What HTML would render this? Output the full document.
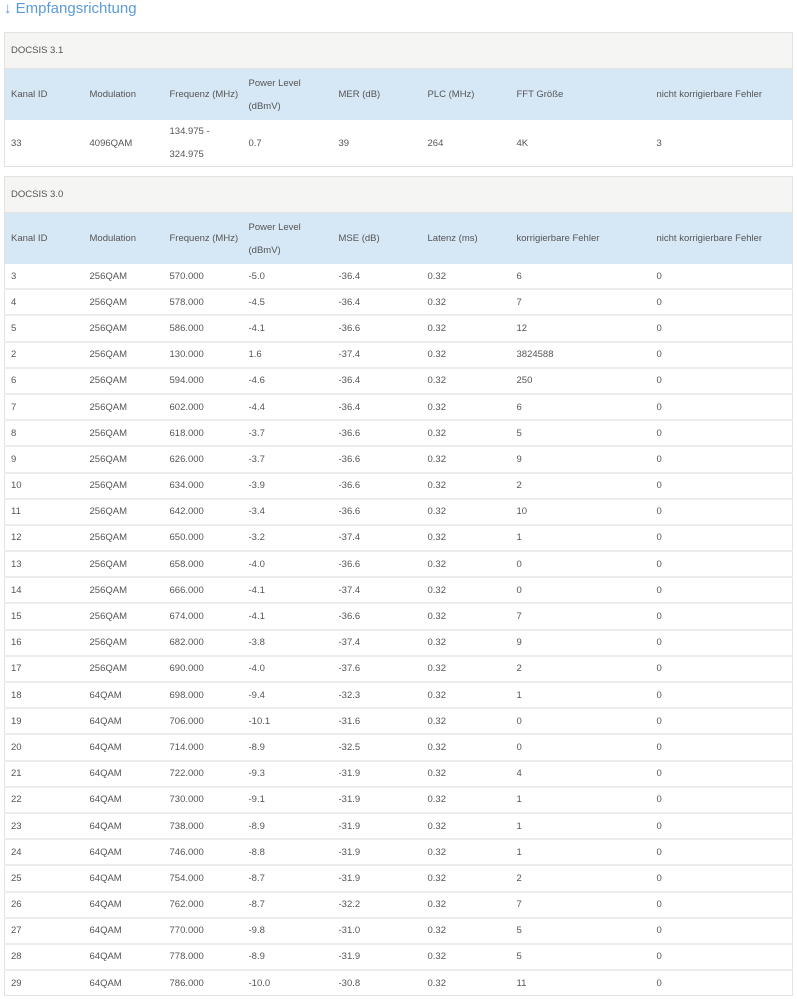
<!DOCTYPE html>
<html><head><meta charset="utf-8"><style>
body{margin:0;background:#fff;font-family:"Liberation Sans",sans-serif;color:#555;}
h2{position:absolute;left:4px;top:-1px;margin:0;font-size:15px;font-weight:normal;color:#5b9bd9;line-height:20px;}
table{position:absolute;left:4px;width:789px;border-collapse:collapse;table-layout:fixed;font-size:9.5px;border:1px solid #e2e2e2;}
td{padding:0 0 0 6px;white-space:nowrap;overflow:hidden;}
tr.cap td{background:#f5f5f3;height:35px;border-bottom:1px solid #e2e2e2;}
tr.hd td{background:#d6e7f5;height:51px;line-height:23px;}
tr.r td{height:24.2px;border-bottom:2px solid #ececec;}
tr.r:last-child td{border-bottom:none;}
tr.big td{height:46px;line-height:23px;}
</style></head><body>
<h2>↓ Empfangsrichtung</h2>
<table style="top:32px">
<colgroup><col style="width:79px"><col style="width:80px"><col style="width:79px"><col style="width:90px"><col style="width:89px"><col style="width:89px"><col style="width:140px"><col></colgroup>
<tr class="cap"><td colspan="8">DOCSIS 3.1</td></tr>
<tr class="hd"><td>Kanal ID</td><td>Modulation</td><td>Frequenz (MHz)</td><td>Power Level<br>(dBmV)</td><td>MER (dB)</td><td>PLC (MHz)</td><td>FFT Größe</td><td>nicht korrigierbare Fehler</td></tr>
<tr class="big"><td>33</td><td>4096QAM</td><td>134.975 -<br>324.975</td><td>0.7</td><td>39</td><td>264</td><td>4K</td><td>3</td></tr>
</table>
<table style="top:176px">
<colgroup><col style="width:79px"><col style="width:80px"><col style="width:79px"><col style="width:90px"><col style="width:89px"><col style="width:89px"><col style="width:140px"><col></colgroup>
<tr class="cap"><td colspan="8">DOCSIS 3.0</td></tr>
<tr class="hd"><td>Kanal ID</td><td>Modulation</td><td>Frequenz (MHz)</td><td>Power Level<br>(dBmV)</td><td>MSE (dB)</td><td>Latenz (ms)</td><td>korrigierbare Fehler</td><td>nicht korrigierbare Fehler</td></tr>
<tr class="r"><td>3</td><td>256QAM</td><td>570.000</td><td>-5.0</td><td>-36.4</td><td>0.32</td><td>6</td><td>0</td></tr>
<tr class="r"><td>4</td><td>256QAM</td><td>578.000</td><td>-4.5</td><td>-36.4</td><td>0.32</td><td>7</td><td>0</td></tr>
<tr class="r"><td>5</td><td>256QAM</td><td>586.000</td><td>-4.1</td><td>-36.6</td><td>0.32</td><td>12</td><td>0</td></tr>
<tr class="r"><td>2</td><td>256QAM</td><td>130.000</td><td>1.6</td><td>-37.4</td><td>0.32</td><td>3824588</td><td>0</td></tr>
<tr class="r"><td>6</td><td>256QAM</td><td>594.000</td><td>-4.6</td><td>-36.4</td><td>0.32</td><td>250</td><td>0</td></tr>
<tr class="r"><td>7</td><td>256QAM</td><td>602.000</td><td>-4.4</td><td>-36.4</td><td>0.32</td><td>6</td><td>0</td></tr>
<tr class="r"><td>8</td><td>256QAM</td><td>618.000</td><td>-3.7</td><td>-36.6</td><td>0.32</td><td>5</td><td>0</td></tr>
<tr class="r"><td>9</td><td>256QAM</td><td>626.000</td><td>-3.7</td><td>-36.6</td><td>0.32</td><td>9</td><td>0</td></tr>
<tr class="r"><td>10</td><td>256QAM</td><td>634.000</td><td>-3.9</td><td>-36.6</td><td>0.32</td><td>2</td><td>0</td></tr>
<tr class="r"><td>11</td><td>256QAM</td><td>642.000</td><td>-3.4</td><td>-36.6</td><td>0.32</td><td>10</td><td>0</td></tr>
<tr class="r"><td>12</td><td>256QAM</td><td>650.000</td><td>-3.2</td><td>-37.4</td><td>0.32</td><td>1</td><td>0</td></tr>
<tr class="r"><td>13</td><td>256QAM</td><td>658.000</td><td>-4.0</td><td>-36.6</td><td>0.32</td><td>0</td><td>0</td></tr>
<tr class="r"><td>14</td><td>256QAM</td><td>666.000</td><td>-4.1</td><td>-37.4</td><td>0.32</td><td>0</td><td>0</td></tr>
<tr class="r"><td>15</td><td>256QAM</td><td>674.000</td><td>-4.1</td><td>-36.6</td><td>0.32</td><td>7</td><td>0</td></tr>
<tr class="r"><td>16</td><td>256QAM</td><td>682.000</td><td>-3.8</td><td>-37.4</td><td>0.32</td><td>9</td><td>0</td></tr>
<tr class="r"><td>17</td><td>256QAM</td><td>690.000</td><td>-4.0</td><td>-37.6</td><td>0.32</td><td>2</td><td>0</td></tr>
<tr class="r"><td>18</td><td>64QAM</td><td>698.000</td><td>-9.4</td><td>-32.3</td><td>0.32</td><td>1</td><td>0</td></tr>
<tr class="r"><td>19</td><td>64QAM</td><td>706.000</td><td>-10.1</td><td>-31.6</td><td>0.32</td><td>0</td><td>0</td></tr>
<tr class="r"><td>20</td><td>64QAM</td><td>714.000</td><td>-8.9</td><td>-32.5</td><td>0.32</td><td>0</td><td>0</td></tr>
<tr class="r"><td>21</td><td>64QAM</td><td>722.000</td><td>-9.3</td><td>-31.9</td><td>0.32</td><td>4</td><td>0</td></tr>
<tr class="r"><td>22</td><td>64QAM</td><td>730.000</td><td>-9.1</td><td>-31.9</td><td>0.32</td><td>1</td><td>0</td></tr>
<tr class="r"><td>23</td><td>64QAM</td><td>738.000</td><td>-8.9</td><td>-31.9</td><td>0.32</td><td>1</td><td>0</td></tr>
<tr class="r"><td>24</td><td>64QAM</td><td>746.000</td><td>-8.8</td><td>-31.9</td><td>0.32</td><td>1</td><td>0</td></tr>
<tr class="r"><td>25</td><td>64QAM</td><td>754.000</td><td>-8.7</td><td>-31.9</td><td>0.32</td><td>2</td><td>0</td></tr>
<tr class="r"><td>26</td><td>64QAM</td><td>762.000</td><td>-8.7</td><td>-32.2</td><td>0.32</td><td>7</td><td>0</td></tr>
<tr class="r"><td>27</td><td>64QAM</td><td>770.000</td><td>-9.8</td><td>-31.0</td><td>0.32</td><td>5</td><td>0</td></tr>
<tr class="r"><td>28</td><td>64QAM</td><td>778.000</td><td>-8.9</td><td>-31.9</td><td>0.32</td><td>5</td><td>0</td></tr>
<tr class="r"><td>29</td><td>64QAM</td><td>786.000</td><td>-10.0</td><td>-30.8</td><td>0.32</td><td>11</td><td>0</td></tr>
</table>
</body></html>
